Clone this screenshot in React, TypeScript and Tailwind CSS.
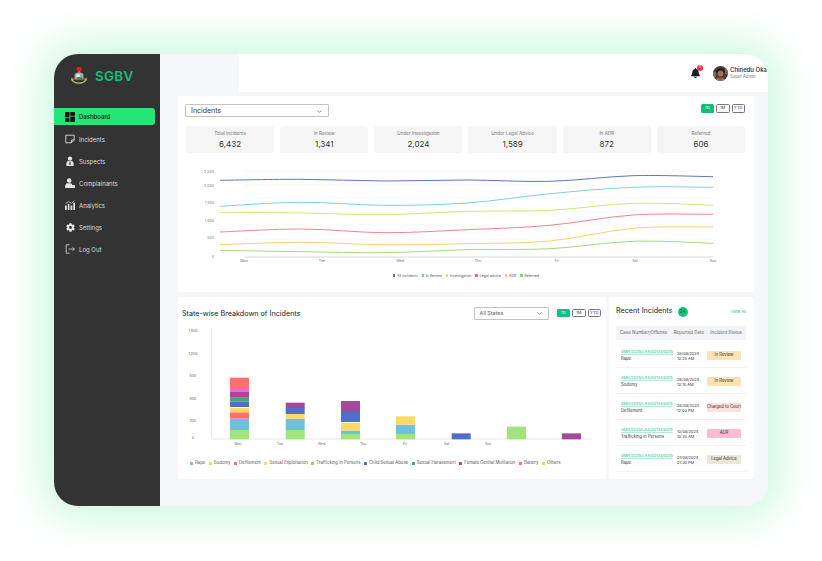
import React from "react";
import { FaBell, FaCog } from "react-icons/fa";
import { LuChevronDown } from "react-icons/lu";

const Dash = () => (
  <svg viewBox="0 0 10 10" className="h-[10px] w-[10px]" fill="#111">
    <rect x="0" y="0" width="4.5" height="5.5" rx=".4" />
    <rect x="0" y="6.3" width="4.5" height="3.7" rx=".4" />
    <rect x="5.3" y="0" width="4.7" height="3.7" rx=".4" />
    <rect x="5.3" y="4.5" width="4.7" height="5.5" rx=".4" />
  </svg>
);
const Note = () => (
  <svg viewBox="0 0 10 10" className="h-[10px] w-[10px]" fill="none" stroke="#ddd" strokeWidth=".9">
    <path d="M.8 1.2H9.2V6L6.4 8.8H.8Z" />
    <path d="M9.2 6H6.4V8.8" />
  </svg>
);
const Suspect = () => (
  <svg viewBox="0 0 10 10" className="h-[10px] w-[10px]" fill="#e5e5e5">
    <circle cx="5" cy="2.6" r="2.2" />
    <path d="M1.4 10V7a2.4 2.4 0 0 1 2.4-2h2.4a2.4 2.4 0 0 1 2.4 2v3Z" />
    <path d="M4.6 5.4h.8l.3 3-.7.8-.7-.8Z" fill="#333" />
  </svg>
);
const Complainant = () => (
  <svg viewBox="0 0 10 10" className="h-[10px] w-[10px]" fill="#e5e5e5">
    <circle cx="4.2" cy="2.6" r="2.3" />
    <path d="M.2 10V7.6A2.6 2.6 0 0 1 2.8 5.3h2.6a2.6 2.6 0 0 1 1.6.6V10Z" />
    <rect x="7" y="7" width="3" height="3" rx=".4" />
  </svg>
);
const Analytics = () => (
  <svg viewBox="0 0 10 10" className="h-[10px] w-[10px]" fill="#e5e5e5">
    <rect x="0" y="5.5" width="1.7" height="4.5" />
    <rect x="2.8" y="4" width="1.7" height="6" />
    <rect x="5.6" y="5.6" width="1.7" height="4.4" />
    <rect x="8.3" y="2.6" width="1.7" height="7.4" />
    <path d="M.5 3.6 3.6 1.6 6.4 3.4 9.4.6" fill="none" stroke="#e5e5e5" strokeWidth=".7" />
  </svg>
);
const LogOut = () => (
  <svg viewBox="0 0 10 10" className="h-[10px] w-[10px]" fill="none" stroke="#ddd" strokeWidth=".8">
    <path d="M4.6 .8H1.2V9.2H4.6" />
    <path d="M3.6 5H9.4M7.5 3.2 9.4 5 7.5 6.8" />
  </svg>
);
const Gear = () => <FaCog className="h-[9px] w-[9px] text-[#e8e8e8]" />;

const nav = [
  { label: "Incidents", icon: <Note /> },
  { label: "Suspects", icon: <Suspect /> },
  { label: "Complainants", icon: <Complainant /> },
  { label: "Analytics", icon: <Analytics /> },
  { label: "Settings", icon: <Gear /> },
  { label: "Log Out", icon: <LogOut /> },
];

const Logo = () => (
  <svg viewBox="0 0 18 20" className="h-[18px] w-[16px]">
    <rect x="6.6" y="0" width="5" height="4.5" fill="#d81e1e" />
    <path d="M8 4.5h2.5v2H8Z" fill="#7a7a7a" />
    <path d="M4 8 C6 5.5 12 5.5 14 8 V14 H4Z" fill="#a9a9a9" />
    <path d="M6 8h4v3H6Z" fill="#ececec" />
    <path d="M8 11l5 1v2H6Z" fill="#2f8f3a" />
    <path d="M1 13.5C3 19.5 15 19.5 17 13.5" fill="none" stroke="#c9c34a" strokeWidth="1.6" />
    <path d="M1 12v3M17 12v3" stroke="#c9c34a" strokeWidth="1.2" />
    <path d="M3 12.5v2M15 12.5v2" stroke="#777" strokeWidth="1.4" />
  </svg>
);

const Avatar = () => (
  <svg viewBox="0 0 15 15" className="h-[15px] w-[15px] rounded-full">
    <rect width="15" height="15" fill="#4b3b36" />
    <path d="M3 5.5C4 1.5 11 1.5 12 5.5L11 7H4Z" fill="#1d1a1c" />
    <ellipse cx="7.5" cy="7.5" rx="2.8" ry="3" fill="#a5705a" />
    <path d="M1.5 15c.5-4 11.5-4 12 0Z" fill="#8f7d7a" />
    <path d="M5 11.5l2.5 3.5 2.5-3.5Z" fill="#c2433e" />
    <path d="M0 6h3v5H0ZM12 3h3v5h-3Z" fill="#7c6a58" />
  </svg>
);

const Periods = () => (
  <div className="flex gap-[2px]">
    <div className="flex h-[8.5px] w-[13.5px] items-center justify-center rounded-[1.5px] bg-[#12bf7c] text-[4px] text-white">7D</div>
    <div className="flex h-[8.5px] w-[13.5px] items-center justify-center rounded-[1.5px] border-[0.6px] border-[#777] text-[4px] text-[#333]">1M</div>
    <div className="flex h-[8.5px] w-[13.5px] items-center justify-center rounded-[1.5px] border-[0.6px] border-[#777] text-[4px] text-[#333]">YTD</div>
  </div>
);

const stats = [
  ["Total Incidents", "6,432"],
  ["In Review", "1,341"],
  ["Under Investigation", "2,024"],
  ["Under Legal Advice", "1,589"],
  ["In ADR", "872"],
  ["Referred", "606"],
];

const xs = [220, 302, 385, 467, 550, 633, 713];
const series = [
  { c: "#5b74c9", y: [180.3, 179.3, 181, 180, 181.3, 175.7, 176.7] },
  { c: "#86cbe4", y: [206.3, 202.3, 205.3, 203, 193.7, 187.3, 187.3] },
  { c: "#cdea6c", y: [212.3, 213, 214.7, 211.3, 210.3, 203.3, 205.3] },
  { c: "#f28489", y: [232, 229, 232.7, 229.7, 225.3, 215, 214.3] },
  { c: "#fbd06e", y: [244.7, 242.3, 244.7, 243.7, 241, 228.3, 227] },
  { c: "#a3d97f", y: [250.3, 251.7, 252.7, 249.7, 248.7, 241.3, 243.3] },
];
const linePath = (y: number[]) => {
  let d = `M${xs[0]} ${y[0]}`;
  for (let i = 1; i < xs.length; i++) {
    const p0 = Math.max(i - 2, 0);
    const p3 = Math.min(i + 1, xs.length - 1);
    const c1x = xs[i - 1] + (xs[i] - xs[p0]) / 6;
    const c1y = y[i - 1] + (y[i] - y[p0]) / 6;
    const c2x = xs[i] - (xs[p3] - xs[i - 1]) / 6;
    const c2y = y[i] - (y[p3] - y[i - 1]) / 6;
    d += ` C${c1x} ${c1y} ${c2x} ${c2y} ${xs[i]} ${y[i]}`;
  }
  return d;
};

const LineChart = () => (
  <svg viewBox="178 160 576 110" className="block h-[110px] w-[576px]">
    {[171, 185, 198, 212, 225, 239].map((g) => (
      <line key={g} x1="244" x2="713" y1={g} y2={g} stroke="#f1f2f5" strokeWidth=".6" />
    ))}
    <line x1="244" x2="713" y1="257" y2="257" stroke="#c9c9c9" strokeWidth=".7" />
    {[["2,500", 172], ["2,000", 186], ["1,500", 203], ["1,000", 221], ["500", 238], ["0", 257]].map(([t, y]) => (
      <text key={t} x="214" y={Number(y) + 1} textAnchor="end" fontSize="3.6" fill="#777">{t}</text>
    ))}
    {[["Mon", 244], ["Tue", 322], ["Wed", 400], ["Thu", 478], ["Fri", 557], ["Sat", 635], ["Sun", 713]].map(([t, x]) => (
      <text key={t} x={x} y="262" textAnchor="middle" fontSize="3.6" fill="#666">{t}</text>
    ))}
    {series.map((s) => (
      <path key={s.c} d={linePath(s.y)} fill="none" stroke={s.c} strokeWidth="1" />
    ))}
  </svg>
);

const G = "#a0e37f", LB = "#6fbfdf", R = "#ff6f6f", Y = "#ffd966", B = "#5070c8", DG = "#4aa070", P = "#a44a9c", PK = "#ff66c4";
const bars: { x: number; s: [number, number, string][] }[] = [
  { x: 230, s: [[405, 433, G], [371, 405, LB], [352, 371, R], [338, 352, Y], [320, 336, B], [308, 320, DG], [291, 308, P], [276, 291, PK], [248, 276, R]] },
  { x: 285.7, s: [[405, 433, G], [371, 405, LB], [357, 371, Y], [339, 357, B], [323, 339, P]] },
  { x: 341, s: [[417, 433, G], [407, 417, LB], [383, 407, Y], [348, 381, B], [318, 348, P]] },
  { x: 396, s: [[417, 433, G], [389, 417, LB], [364, 389, Y]] },
  { x: 451.7, s: [[415, 433, B]] },
  { x: 507, s: [[395, 433, G]] },
  { x: 562, s: [[415, 433, P]] },
];

const BarChart = () => (
  <svg viewBox="178 323 428 129" className="block h-[129px] w-[428px]">
    <line x1="211.7" x2="211.7" y1="328" y2="439" stroke="#dcdcdc" strokeWidth=".7" />
    <line x1="211.7" x2="592" y1="439" y2="439" stroke="#dcdcdc" strokeWidth=".7" />
    {[["1,600", 332], ["1,200", 355], ["800", 377], ["600", 400], ["200", 422], ["0", 439]].map(([t, y]) => (
      <text key={t} x="193" y={y} textAnchor="middle" fontSize="3.6" fill="#666">{t}</text>
    ))}
    {[["Mon", 238], ["Tue", 280], ["Wed", 321.7], ["Thu", 363], ["Fri", 405], ["Sat", 446.7], ["Sun", 488]].map(([t, x]) => (
      <text key={t} x={x} y="445" textAnchor="middle" fontSize="3.4" fill="#666">{t}</text>
    ))}
    {bars.map((b) =>
      b.s.map(([a, z, c]) => (
        <rect key={`${b.x}-${a}`} x={b.x} y={295 + a / 3} width="19" height={(z - a) / 3} fill={c} />
      ))
    )}
  </svg>
);

const legend1 = [
  ["All Incidents", "bg-[#4f6ac4]"],
  ["In Review", "bg-[#6fbfdf]"],
  ["Investigation", "bg-[#cdea6c]"],
  ["Legal advice", "bg-[#f0696f]"],
  ["ADR", "bg-[#fbc85a]"],
  ["Referred", "bg-[#92d26d]"],
];
const legend2 = [
  ["Rape", "bg-[#6fbfdf]"],
  ["Sodomy", "bg-[#cdea6c]"],
  ["Defilement", "bg-[#ff6f6f]"],
  ["Sexual Exploitation", "bg-[#ffd966]"],
  ["Trafficking in Persons", "bg-[#92d26d]"],
  ["Child Sexual Abuse", "bg-[#5070c8]"],
  ["Sexual Harassment", "bg-[#4aa070]"],
  ["Female Genital Mutilation", "bg-[#a44a9c]"],
  ["Battery", "bg-[#ff66c4]"],
  ["Others", "bg-[#e6e23c]"],
];

const rows = [
  ["SMH/2025/LAS/00134/0015", "Rape", "28/08/2024", "10:25 AM", "In Review", "bg-[#fde3b4]"],
  ["SMH/2025/LAS/00134/0015", "Sodomy", "28/08/2024", "10:10 AM", "In Review", "bg-[#fde3b4]"],
  ["SMH/2025/LAS/00134/0015", "Defilement", "28/08/2024", "12:00 PM", "Charged to Court", "bg-[#fde0dc]"],
  ["SMH/2025/LAS/00134/0015", "Trafficking in Persons", "10/08/2024", "10:20 AM", "ADR", "bg-[#fdbcd3]"],
  ["SMH/2025/LAS/00134/0015", "Rape", "01/08/2024", "01:30 PM", "Legal Advice", "bg-[#eee6d6]"],
];

export default function App() {
  return (
    <div className="h-[561px] w-[822px] overflow-hidden bg-white p-[54px] pb-0 [font-family:Inter,sans-serif]">
      <div className="flex h-[452px] w-[714px] rounded-[24px] shadow-[0_0_40px_12px_#cdf8df]">
        <div className="flex h-full w-full overflow-hidden rounded-[24px]">
          <aside className="h-full w-[106px] shrink-0 bg-[#333333]">
            <div className="flex h-[54px] items-start gap-[8px] pl-[17px] pt-[13px]">
              <Logo />
              <span className="text-[13.4px] leading-[18px] font-semibold tracking-[0.3px] text-[#12bf7c]">SGBV</span>
            </div>
            <div className="mb-[3px] flex h-[17px] w-[101px] items-center gap-[4px] rounded-r-[3px] bg-[#23e677] pl-[10.5px] text-[6px] font-medium text-[#111]">
              <Dash />
              <span className="pl-[0.5px]">Dashboard</span>
            </div>
            <div className="flex flex-col">
              {nav.map((n) => (
                <div key={n.label} className="flex h-[22px] items-center gap-[4px] pl-[11px] text-[6px] text-[#dcdcdc]">
                  <span className="flex w-[10px] justify-center">{n.icon}</span>
                  <span>{n.label}</span>
                </div>
              ))}
            </div>
          </aside>

          <main className="flex min-w-0 flex-1 flex-col bg-[#f5f7fb]">
            <div className="flex h-[38px] shrink-0 pl-[79px]">
              <div className="flex flex-1 items-center bg-white pl-[452px]">
                <div className="relative mr-[13px]">
                  <FaBell className="h-[10px] w-[9px] text-[#1c1c1c]" />
                  <span className="absolute -right-[3px] -top-[3px] flex h-[6px] w-[6px] items-center justify-center rounded-full bg-[#ef2b45] text-[3.5px] text-white">3</span>
                </div>
                <Avatar />
                <div className="ml-[2px] whitespace-nowrap">
                  <div className="text-[6px] font-medium leading-[8px] text-[#222]">Chinedu Oka</div>
                  <div className="text-[4.2px] leading-[6px] text-[#777]">Super Admin</div>
                </div>
              </div>
            </div>

            <div className="ml-[18px] mr-[14px] mt-[4px] h-[196px] shrink-0 rounded-[2px] bg-white">
              <div className="flex items-start justify-between pl-[7px] pr-[9px] pt-[8px]">
                <div className="flex h-[13px] w-[144px] items-center justify-between rounded-[1px] border-[0.7px] border-[#c4c4c4] pl-[5px] pr-[5px] pt-[1px] text-[7px] font-normal text-[#333]">
                  <span>Incidents</span>
                  <LuChevronDown className="h-[7px] w-[7px] text-[#444]" />
                </div>
                <Periods />
              </div>
              <div className="mt-[9px] grid grid-cols-6 gap-[6px] pl-[8px] pr-[9px]">
                {stats.map(([l, v]) => (
                  <div key={l} className="flex h-[27px] flex-col items-center justify-center rounded-[3px] bg-[#f5f5f5]">
                    <div className="text-[4.6px] leading-[8px] text-[#777]">{l}</div>
                    <div className="text-[8px] font-normal leading-[12px] text-[#333]">{v}</div>
                  </div>
                ))}
              </div>
              <div className="mt-[7px]">
                <LineChart />
              </div>
              <div className="flex justify-center gap-[4px] pt-[0.5px] text-[3.6px] leading-[10px] text-[#555]">
                {legend1.map(([t, c]) => (
                  <div key={t} className="flex items-center gap-[1.5px]">
                    <span className={`h-[2.5px] w-[2.5px] rounded-[0.5px] ${c}`} />
                    {t}
                  </div>
                ))}
              </div>
            </div>

            <div className="ml-[18px] mr-[14px] mt-[5px] flex h-[182px] shrink-0 gap-[3px]">
              <section className="w-[428px] rounded-[2px] bg-white">
                <div className="flex h-[26px] items-center pl-[4px] pr-[5px] pt-[6px]">
                  <div className="pt-[2px] text-[7.2px] font-normal text-[#222]">State-wise Breakdown of Incidents</div>
                  <div className="ml-auto mr-[8px] flex h-[13px] w-[75px] items-center justify-between rounded-[1px] border-[0.7px] border-[#c4c4c4] px-[5px] text-[5.4px] text-[#666]">
                    <span>All States</span>
                    <LuChevronDown className="h-[7px] w-[7px] text-[#444]" />
                  </div>
                  <Periods />
                </div>
                <BarChart />
                <div className="flex gap-[3.5px] pl-[12px] pt-[6px] text-[4.3px] leading-[10px] text-[#555]">
                  {legend2.map(([t, c]) => (
                    <div key={t} className="flex items-center gap-[2px] whitespace-nowrap">
                      <span className={`h-[3px] w-[3px] rounded-[0.5px] ${c}`} />
                      {t}
                    </div>
                  ))}
                </div>
              </section>

              <section className="flex-1 rounded-[4px] bg-white pl-[7px] pr-[8px]">
                <div className="flex h-[29px] items-center">
                  <div className="text-[7.2px] font-normal text-[#222]">Recent Incidents</div>
                  <div className="ml-[5px] flex h-[10px] w-[10px] items-center justify-center rounded-full bg-[#16c680] text-[5px] text-[#0f5c3f]">24</div>
                  <div className="ml-auto text-[4px] text-[#12bf7c]">View All</div>
                </div>
                <div className="mb-[2px] flex h-[14px] items-center justify-between bg-[#f2f4f8] px-[4px] text-[4.5px] whitespace-nowrap text-[#666]">
                  <span>Case Number/Offense</span>
                  <span>Reported Date</span>
                  <span>Incident Status</span>
                </div>
                {rows.map((r, i) => (
                  <div key={i} className="flex h-[26px] items-center border-b-[0.6px] border-[#f1f2f4] pl-[5px] pt-[2px]">
                    <div className="w-[56px] shrink-0">
                      <div className="text-[3.9px] leading-[6px] whitespace-nowrap text-[#12bf7c] underline decoration-[#b5ecd6] underline-offset-[1px]">{r[0]}</div>
                      <div className="text-[4.2px] leading-[7px] whitespace-nowrap text-[#333]">{r[1]}</div>
                    </div>
                    <div className="w-[30px] shrink-0 text-[3.9px] leading-[5px] text-[#333]">
                      <div>{r[2]}</div>
                      <div>{r[3]}</div>
                    </div>
                    <div className={`flex h-[9px] w-[34px] shrink-0 items-center justify-center rounded-[1px] text-[4.2px] whitespace-nowrap text-[#333] ${r[5]}`}>{r[4]}</div>
                  </div>
                ))}
              </section>
            </div>
          </main>
        </div>
      </div>
    </div>
  );
}
